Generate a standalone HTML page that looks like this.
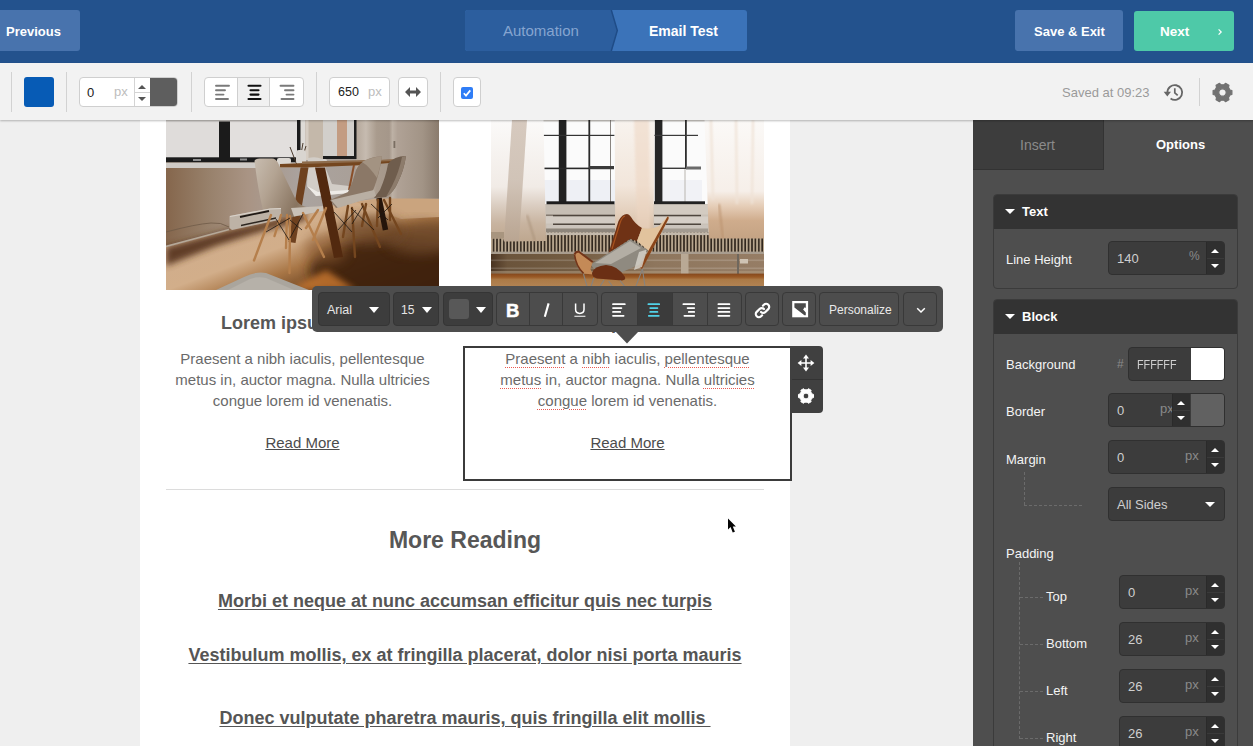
<!DOCTYPE html>
<html>
<head>
<meta charset="utf-8">
<title>Email Designer</title>
<style>
*{box-sizing:border-box;margin:0;padding:0}
html,body{width:1253px;height:746px;overflow:hidden}
body{position:relative;background:#efefef;font-family:"Liberation Sans",sans-serif;font-size:13px;color:#333}
.abs{position:absolute}
.t{position:absolute;white-space:nowrap;line-height:1}
/* top bar */
#topbar{position:absolute;left:0;top:0;width:1253px;height:63px;background:#23528d}
.tbtn{position:absolute;top:10px;height:41px;border-radius:3px;background:#4873ad;color:#fff;font-weight:700;font-size:13px}
/* toolbar */
#toolbar{position:absolute;left:0;top:63px;width:1253px;height:57px;background:#f2f2f2;box-shadow:0 1px 2px rgba(0,0,0,.26);z-index:5}
.sep{position:absolute;top:9px;width:1px;height:40px;background:#d2d2d2}
.wbox{position:absolute;top:14px;height:30px;background:#fff;border:1px solid #cfcfcf;border-radius:4px}
/* sidebar */
#side{position:absolute;left:973px;top:120px;width:280px;height:626px;background:#4e4e4e;color:#f2f2f2;z-index:4}
.panel{position:absolute;left:20px;width:245px;border:1px solid #3b3b3b;border-radius:4px;background:#4e4e4e;overflow:hidden}
.phead{position:absolute;left:0;top:0;width:100%;height:34px;background:#333}
.din{position:absolute;height:34px;background:#3c3c3c;border:1px solid #303030;border-radius:4px;overflow:hidden}
.spin{position:absolute;top:0;bottom:0;width:18px;background:#2f2f2f;border-left:1px solid #2a2a2a}
.spin:before{content:"";position:absolute;left:0;right:0;top:16px;height:1px;background:#3a3a3a}
.up{position:absolute;left:4px;top:7px;width:0;height:0;border-left:4.5px solid transparent;border-right:4.5px solid transparent;border-bottom:4px solid #fff}
.dn{position:absolute;left:4px;top:22px;width:0;height:0;border-left:4.5px solid transparent;border-right:4.5px solid transparent;border-top:4px solid #fff}
.val{position:absolute;left:8px;top:10px;font-size:13px;line-height:13px;color:#cfcfcf}
.unit{position:absolute;top:8px;font-size:13px;line-height:13px;color:#8a8a8a}
.lbl{margin-top:-1px;position:absolute;font-size:13px;line-height:13px;color:#f4f4f4;white-space:nowrap}
.dash-v{position:absolute;width:0;border-left:1px dashed #6b6b6b}
.dash-h{position:absolute;height:0;border-top:1px dashed #6b6b6b}
/* canvas */
#page{position:absolute;left:140px;top:120px;width:650px;height:626px;background:#fff}
.em{position:absolute;white-space:nowrap;font-family:"Liberation Sans",sans-serif}
/* float toolbar */
#ftb{position:absolute;left:312px;top:286px;width:631px;height:46px;background:#4d4d4d;border-radius:5px;z-index:8}
.fb{position:absolute;top:6px;height:34px;border:1px solid #393939;border-radius:4px;background:#4d4d4d;overflow:hidden}
.fb.dark{background:#3d3d3d;border-color:#353535}
.tri{position:absolute;width:0;height:0;border-left:5.5px solid transparent;border-right:5.5px solid transparent;border-top:6px solid #fff}
.vd{position:absolute;top:0;bottom:0;width:1px;background:#393939}
.sp u{text-decoration:underline dotted #ea5a52;text-decoration-thickness:1.3px;text-underline-offset:2.5px}
.lk{text-decoration-thickness:1.4px;text-underline-offset:2px}
</style>
</head>
<body>

<!-- ============ TOP BAR ============ -->
<div id="topbar">
  <div class="tbtn" style="left:-4px;width:84px"><span class="t" style="left:10px;top:15px">Previous</span></div>
  <!-- steps -->
  <svg class="abs" style="left:465px;top:10px" width="282" height="41" viewBox="0 0 282 41">
    <path d="M3 0H279Q282 0 282 3V38Q282 41 279 41H3Q0 41 0 38V3Q0 0 3 0Z" fill="#3b73b9"/>
    <path d="M3 0H146.3L152.3 20.5L146.3 41H3Q0 41 0 38V3Q0 0 3 0Z" fill="#2c5e9e"/>
    <path d="M146.3 0L152.3 20.5L146.3 41" fill="none" stroke="#1f4c87" stroke-width="1.5"/>
  </svg>
  <span class="t" style="left:503px;top:23px;font-size:15px;color:#86a5d0">Automation</span>
  <span class="t" style="left:649px;top:24px;font-size:14px;font-weight:700;color:#fff">Email Test</span>
  <div class="tbtn" style="left:1015px;width:108px"><span class="t" style="left:19px;top:15px">Save &amp; Exit</span></div>
  <div class="tbtn" style="left:1134px;top:11px;height:40px;width:100px;background:#4ec9a8"><span class="t" style="left:26px;top:14px;font-size:13.5px">Next</span>
    <svg class="abs" style="left:83px;top:17px" width="6" height="8" viewBox="0 0 6 8"><path d="M1.6 1.4L4.2 4L1.6 6.6" fill="none" stroke="#fff" stroke-width="1.2"/></svg>
  </div>
</div>

<!-- ============ TOOLBAR ============ -->
<div id="toolbar">
  <div class="sep" style="left:11px"></div>
  <div class="abs" style="left:24px;top:14px;width:30px;height:30px;border-radius:3px;background:#075bb5"></div>
  <div class="sep" style="left:66px"></div>
  <!-- border input -->
  <div class="wbox" style="left:79px;width:99px;overflow:hidden">
    <span class="t" style="left:7px;top:8px;font-size:13px;color:#222">0</span>
    <span class="t" style="left:34px;top:7px;font-size:13px;color:#bdbdbd">px</span>
    <div class="abs" style="left:54px;top:0;width:1px;height:28px;background:#d4d4d4"></div>
    <div class="abs" style="left:55px;top:14px;width:15px;height:1px;background:#d4d4d4"></div>
    <div class="abs" style="left:58px;top:7px;width:0;height:0;border-left:4px solid transparent;border-right:4px solid transparent;border-bottom:4px solid #555"></div>
    <div class="abs" style="left:58px;top:19px;width:0;height:0;border-left:4px solid transparent;border-right:4px solid transparent;border-top:4px solid #555"></div>
    <div class="abs" style="left:70px;top:-1px;width:29px;height:30px;background:#5e5e5e"></div>
  </div>
  <div class="sep" style="left:191px"></div>
  <!-- align group -->
  <div class="wbox" style="left:204px;width:100px;overflow:hidden">
    <div class="abs" style="left:32px;top:0;width:33px;height:28px;background:#f1f1f1;border-left:1px solid #cfcfcf;border-right:1px solid #cfcfcf"></div>
    <svg class="abs" style="left:0;top:-1px" width="98" height="28" viewBox="0 0 98 28" fill="none" stroke-linecap="round" stroke-width="1.9">
      <g stroke="#7a7a7a"><path d="M11 8.8H24M11 13.2H20M11 17.6H18.5M11 22H23"/></g>
      <g stroke="#111" stroke-width="2.1"><path d="M43.5 8.8H55.5M45.5 13.2H53.5M45.5 17.6H53.5M43.5 22H55.5"/></g>
      <g stroke="#7a7a7a"><path d="M75.5 8.8H88.5M80 13.2H88.5M81.5 17.6H88.5M76.5 22H88.5"/></g>
    </svg>
  </div>
  <div class="sep" style="left:316px"></div>
  <div class="wbox" style="left:329px;width:61px">
    <span class="t" style="left:8px;top:8px;font-size:12.5px;color:#222">650</span>
    <span class="t" style="left:38px;top:7px;font-size:13px;color:#bdbdbd">px</span>
  </div>
  <div class="wbox" style="left:398px;width:30px">
    <svg class="abs" style="left:6px;top:8px" width="16" height="12" viewBox="0 0 16 12"><path d="M0 6L5 1V4.6H11V1L16 6L11 11V7.4H5V11Z" fill="#555"/></svg>
  </div>
  <div class="sep" style="left:440px"></div>
  <div class="wbox" style="left:453px;width:28px">
    <div class="abs" style="left:7px;top:9px;width:12px;height:12px;border-radius:2px;background:#2f7df6"></div>
    <svg class="abs" style="left:7px;top:9px" width="12" height="12" viewBox="0 0 12 12"><path d="M2.8 6.2L5 8.6L9.3 3.4" fill="none" stroke="#fff" stroke-width="1.7"/></svg>
  </div>
  <span class="t" style="left:1062px;top:23px;font-size:13px;color:#9a9a9a">Saved at 09:23</span>
  <!-- history icon -->
  <svg class="abs" style="left:1163px;top:20px" width="22" height="19" viewBox="0 0 22 19" fill="none">
    <path d="M4.4 9.5A7.4 7.4 0 1 1 7.56 15.56" stroke="#666" stroke-width="1.8"/>
    <path d="M0.7 8.7H8L4.3 13.5Z" fill="#666"/>
    <path d="M11.8 5.2V9.8L14.7 12.4" stroke="#666" stroke-width="1.7"/>
  </svg>
  <div class="abs" style="left:1199px;top:15px;width:1px;height:28px;background:#d2d2d2"></div>
  <svg class="abs" style="left:1212px;top:19px" width="21" height="21" viewBox="-10.5 -10.5 21 21"><path fill-rule="evenodd" fill="#727272" stroke="#727272" stroke-width="1.2" stroke-linejoin="round" d="M7.49 -2.52L9.39 -2.00L9.39 2.00L7.49 2.52L5.93 5.22L6.42 7.13L2.97 9.13L1.56 7.74L-1.56 7.74L-2.97 9.13L-6.42 7.13L-5.93 5.22L-7.49 2.52L-9.39 2.00L-9.39 -2.00L-7.49 -2.52L-5.93 -5.22L-6.42 -7.13L-2.97 -9.13L-1.56 -7.74L1.56 -7.74L2.97 -9.13L6.42 -7.13L5.93 -5.22ZM3.7 0A3.7 3.7 0 1 0 -3.7 0A3.7 3.7 0 1 0 3.7 0Z"/></svg>
</div>

<!-- ============ CANVAS PAGE ============ -->
<div id="page"></div>

<svg class="abs" style="left:166px;top:120px;z-index:1" width="273" height="170" viewBox="0 0 273 170">
  <defs>
    <linearGradient id="lwall" x1="0" x2="1" y1="0" y2="0">
      <stop offset="0" stop-color="#85664c"/><stop offset="0.15" stop-color="#97806a"/><stop offset="0.3" stop-color="#a99484"/><stop offset="0.5" stop-color="#aaa39f"/><stop offset="1" stop-color="#a89a8c"/>
    </linearGradient>
    <linearGradient id="lfloor" x1="0" x2="1" y1="0" y2="0.9">
      <stop offset="0" stop-color="#cdac8e"/><stop offset="0.5" stop-color="#d2ae8a"/><stop offset="0.64" stop-color="#a87646"/><stop offset="0.82" stop-color="#5e391c"/><stop offset="1" stop-color="#3a1e0e"/>
    </linearGradient>
    <linearGradient id="lrwall" x1="0" x2="1" y1="0" y2="0">
      <stop offset="0" stop-color="#b5a89b"/><stop offset="0.12" stop-color="#c6bbb0"/><stop offset="0.25" stop-color="#a99b8d"/><stop offset="0.4" stop-color="#a5978a"/><stop offset="0.44" stop-color="#bdb1a5"/><stop offset="0.5" stop-color="#b0a296"/><stop offset="0.8" stop-color="#a29486"/><stop offset="1" stop-color="#8a7b6d"/>
    </linearGradient>
    <linearGradient id="lchair1" x1="0" x2="1" y1="0" y2="0.4">
      <stop offset="0" stop-color="#c8bdb0"/><stop offset="0.35" stop-color="#b3a392"/><stop offset="0.8" stop-color="#887460"/><stop offset="1" stop-color="#a39380"/>
    </linearGradient>
    <filter id="b3" x="-20%" y="-20%" width="140%" height="140%"><feGaussianBlur stdDeviation="3"/></filter>
    <filter id="b6" x="-30%" y="-30%" width="160%" height="160%"><feGaussianBlur stdDeviation="6"/></filter>
    <filter id="b1" x="-10%" y="-10%" width="120%" height="120%"><feGaussianBlur stdDeviation="0.7"/></filter>
    <clipPath id="lclip"><rect width="273" height="170"/></clipPath>
  </defs>
  <g clip-path="url(#lclip)">
  <!-- wall -->
  <rect width="273" height="170" fill="url(#lwall)"/>
  <!-- floor -->
  <path d="M0 127L63 110L115 98L150 88L200 80L227 77L273 79V170H0Z" fill="url(#lfloor)"/>
  <!-- lighter strip top right of floor -->
  <path d="M190 82L227 77L273 79V97L235 99Z" fill="#caa47e" filter="url(#b1)"/>
  <!-- floor shadow band along wall -->
  <path d="M0 127L63 110L115 98L140 92L140 100L100 110L50 126L0 146Z" fill="#54331a" opacity=".9" filter="url(#b3)"/>
  <!-- big dark shadow under table -->
  <ellipse cx="222" cy="150" rx="78" ry="34" fill="#41220f" opacity=".92" filter="url(#b6)"/>
  <ellipse cx="255" cy="118" rx="36" ry="16" fill="#6e4a2c" opacity=".8" filter="url(#b6)"/>
  <path d="M130 166L160 150L190 170H130Z" fill="#c4752f" opacity=".85" filter="url(#b3)"/>
  <ellipse cx="160" cy="128" rx="22" ry="16" fill="#8a5a30" opacity=".55" filter="url(#b6)"/>
  <ellipse cx="203" cy="110" rx="34" ry="15" fill="#6a4426" opacity=".7" filter="url(#b6)"/>
  <!-- right wall + door -->
  <rect x="190" y="0" width="83" height="78.5" fill="url(#lrwall)"/>
  <rect x="227.5" y="21" width="1.8" height="7" fill="#7a6e62"/>
  <!-- window 1 panes -->
  <rect x="0" y="0" width="135" height="42.5" fill="#1b1b1b"/>
  <rect x="0" y="0" width="53" height="37.3" fill="#dfdcda"/>
  <rect x="64" y="0" width="67" height="37.3" fill="#e2dfdd"/>
  <rect x="0" y="0" width="131" height="1.5" fill="#c9c5c1"/>
  <rect x="27" y="39" width="8" height="2" fill="#8d8d8d"/><rect x="74" y="38.5" width="7" height="2" fill="#8d8d8d"/>
  <rect x="0" y="42.5" width="135" height="5.5" fill="#cfcbc6"/>
  <!-- pillar + window 2 -->
  <rect x="134.5" y="0" width="5" height="37" fill="#dedbd7"/>
  <rect x="139.5" y="0" width="18" height="40" fill="#c4b8aa"/>
  <rect x="139.5" y="0" width="3" height="40" fill="#d6cdc3"/>
  <rect x="157" y="0" width="33.5" height="39" fill="#1d1d1d"/>
  <rect x="157" y="0" width="31" height="36" fill="#d2cfcb"/>
  <rect x="171" y="0" width="10" height="36" fill="#c39c82"/>
  <!-- table items -->
  <path d="M131 45L124 27M134 45L140 26M133 45L137 23" stroke="#4a3a2c" stroke-width="1" fill="none"/>
  <rect x="130" y="30" width="10" height="14" rx="3" fill="#d9d5d0"/>
  <rect x="111" y="38" width="14" height="6" rx="2" fill="#dcd8d3"/>
  <rect x="147" y="39" width="14" height="5" rx="2" fill="#d5d0ca"/>
  <!-- back chair -->
  <path d="M142 38Q150 36 156 39L166 64L183 66V73L150 76L141 66Z" fill="#d2cdc7"/>
  <path d="M141 66L150 76L183 73V70L152 72Z" fill="#eeebe7"/>
  <!-- table top -->
  <path d="M114 44L229 39.5V42.5L200 45L140 47.5H114Z" fill="#74461f"/>
  <path d="M136 41.5L229 39.5V41L136 44Z" fill="#8d6b4b"/>
  <!-- table legs -->
  <path d="M134.5 47.5H142.5L129.5 123L122.5 122Z" fill="#6e411f"/>
  <path d="M149 47.5H159L177 137L168 138Z" fill="#52290f"/>
  <path d="M188 45L183 70" stroke="#8a4e28" stroke-width="2"/>
  <path d="M213 78L219.5 110" stroke="#24140a" stroke-width="5.5"/>
  <!-- chair 3 (far right) -->
  <path d="M222 44Q228 36 240 36Q238 50 232 62Q228 72 220 77L208 78L214 70Q220 56 222 44Z" fill="#6f5d4d"/>
  <path d="M236 37Q239 36 240 36Q238 50 232 62Q228 72 220 77L226 66Q233 52 236 37Z" fill="#8d7c6c"/>
  <!-- chair 2 -->
  <path d="M190 50Q196 37 216 36.5Q213 55 208 68Q205 76 196 80L170 88L164 80L182 72Q187 62 190 50Z" fill="#8b7867"/>
  <path d="M196 42Q204 37 216 36.5Q214 48 211 58Q203 46 196 42Z" fill="#a39382"/>
  <path d="M165 80L208 70L210 76L172 88Z" fill="#b9afa3"/>
  <!-- chair 1 (front-left) -->
  <path d="M88.5 41Q89 38.5 94 38.5H106Q110 38.5 112 43L129 78Q133 86 142 87.5L157 86V91L126 97Q104 98 97 90Q92 70 88.5 41Z" fill="url(#lchair1)"/>
  <path d="M125 88L157 86V91L128 96.5Z" fill="#c9c1b7"/>
  <!-- heater -->
  <path d="M63.5 96L104 88.5L115 88V99.5L66 110L63.5 108Z" fill="#bdb2a6"/>
  <path d="M64 96.5L104 89L115 88.5" stroke="#d9d2ca" stroke-width="1.2" fill="none"/>
  <path d="M74 97L103 91" stroke="#1f1915" stroke-width="1.8"/>
  <path d="M75 105.5L110 98" stroke="#2d2620" stroke-width="1.3"/>
  <path d="M0 112Q30 104 45 103Q55 102 63 107" stroke="#6f5a48" stroke-width="0.8" fill="none"/>
  <path d="M0 126.5L63 109.5" stroke="#b5a898" stroke-width="1.8"/>
  <!-- chair legs -->
  <g stroke="#b57f4c" stroke-width="2.4" stroke-linecap="round" fill="none">
    <path d="M105 95L88 140.5"/><path d="M124 96L123.5 153"/><path d="M115 95L108.5 116"/><path d="M121 95L120 128"/>
    <path d="M137 93L158 137"/><path d="M160 88L147 120"/><path d="M152 90L140 108"/>
  </g>
  <g stroke="#74461f" stroke-width="2.4" stroke-linecap="round" fill="none">
    <path d="M186 88L189 137"/><path d="M182 86L177 117"/><path d="M196 84L214 127"/><path d="M200 84L196 106"/>
    <path d="M218 80L235 114"/><path d="M212 80L211 106"/><path d="M224 78L224 100"/>
  </g>
  <g stroke="#1d1611" stroke-width="0.8" fill="none">
    <path d="M100 112L124 98M110 99L123 120M124 100L136 110M137 94L124 118"/>
    <path d="M168 92L186 112M190 90L172 110M197 86L186 104M185 88L208 110M205 84L222 100M226 84L212 98"/>
  </g>
  <!-- rug -->
  <path d="M50 170L78 157Q90 151 100 153L143 170Z" fill="#aaa59d"/>
  <path d="M62 170L84 159Q92 156 100 158L128 170Z" fill="#b6b1a9" filter="url(#b1)"/>
  </g>
</svg>


<svg class="abs" style="left:491px;top:120px;z-index:1" width="273" height="170" viewBox="0 0 273 170">
  <defs>
    <linearGradient id="rcurt1" x1="0" x2="0" y1="0" y2="1">
      <stop offset="0" stop-color="#fbfaf9"/><stop offset="0.55" stop-color="#f1ebe6"/><stop offset="0.7" stop-color="#dbcec2"/><stop offset="0.85" stop-color="#c8b4a0"/><stop offset="1" stop-color="#bea78f"/>
    </linearGradient>
    <linearGradient id="rcurt2" x1="0" x2="0" y1="0" y2="1">
      <stop offset="0" stop-color="#f8f3ee"/><stop offset="0.6" stop-color="#f2e6db"/><stop offset="0.85" stop-color="#e3cfbc"/><stop offset="1" stop-color="#d8bfa7"/>
    </linearGradient>
    <linearGradient id="rcurt3" x1="0" x2="0" y1="0" y2="1">
      <stop offset="0" stop-color="#fbf9f7"/><stop offset="0.6" stop-color="#f6efe9"/><stop offset="0.72" stop-color="#e6cfba"/><stop offset="0.85" stop-color="#cfac8c"/><stop offset="1" stop-color="#c4a384"/>
    </linearGradient>
    <linearGradient id="rfold" x1="0" x2="0" y1="0" y2="1">
      <stop offset="0" stop-color="#d2c4b8"/><stop offset="0.5" stop-color="#cdbfb2"/><stop offset="1" stop-color="#b9a592"/>
    </linearGradient>
    <linearGradient id="rfloor" x1="0" x2="0" y1="0" y2="1">
      <stop offset="0" stop-color="#85481c"/><stop offset="0.2" stop-color="#9a5a26"/><stop offset="0.35" stop-color="#ab7a47"/><stop offset="1" stop-color="#b5885a"/>
    </linearGradient>
    <linearGradient id="rlow" x1="0" x2="1" y1="0" y2="0"><stop offset="0" stop-color="#4a3422"/><stop offset="0.06" stop-color="#6b543b"/><stop offset="0.3" stop-color="#735c42"/><stop offset="0.6" stop-color="#8e765d"/><stop offset="1" stop-color="#967d65"/></linearGradient>
    <pattern id="rad" x="0" y="0" width="3.4" height="20" patternUnits="userSpaceOnUse">
      <rect width="3.4" height="20" fill="#b9a78f"/><rect x="1.8" width="1.6" height="20" fill="#30261d"/>
    </pattern>
    <filter id="rb1" x="-10%" y="-10%" width="120%" height="120%"><feGaussianBlur stdDeviation="0.8"/></filter>
    <filter id="rb2" x="-10%" y="-10%" width="120%" height="120%"><feGaussianBlur stdDeviation="2"/></filter>
    <clipPath id="rclip"><rect width="273" height="170"/></clipPath>
  </defs>
  <g clip-path="url(#rclip)">
  <rect width="273" height="170" fill="#fbfbfb"/>
  <rect width="273" height="1.5" fill="#d6d2ce"/>
  <!-- lower wall behind -->
  <rect x="0" y="84" width="273" height="70" fill="#c9c1b7"/>
  <!-- window 1 -->
  <rect x="52" y="60" width="72" height="22" fill="#eef0f5"/>
  <rect x="67.8" y="0" width="7.6" height="84" fill="#222"/>
  <rect x="97.4" y="0" width="1.8" height="82" fill="#2a2a2a"/>
  <rect x="119" y="0" width="1" height="82" fill="#8a8580"/>
  <rect x="52.5" y="14.8" width="71" height="1.2" fill="#333"/>
  <rect x="53" y="47.6" width="70" height="1.6" fill="#2a2a2a"/>
  <rect x="98" y="46" width="25" height="3" fill="#3a3a3a"/>
  <rect x="55.5" y="81.3" width="68" height="3.2" fill="#1d1d1d"/>
  <!-- window 2 -->
  <rect x="171" y="60" width="40" height="22" fill="#f1f2f6"/>
  <rect x="163.8" y="0" width="7.6" height="84" fill="#262626"/>
  <rect x="194" y="0" width="1.8" height="48" fill="#2e2e2e"/>
  <rect x="193.5" y="48" width="1" height="34" fill="#b9b5b0"/>
  <rect x="162" y="14.8" width="45" height="1.2" fill="#3a3a3a"/>
  <rect x="171" y="47.6" width="24" height="1.4" fill="#3a3a3a"/>
  <rect x="195" y="46.5" width="15" height="3" fill="#6a6a6a"/>
  <rect x="163" y="81.3" width="51" height="3" fill="#222"/>
  <!-- far right window bits -->
  <rect x="269" y="14.5" width="4" height="1.2" fill="#777"/><rect x="269" y="48" width="4" height="1.2" fill="#777"/>
  <rect x="268.5" y="64" width="4.5" height="12" fill="#7a6a55"/><rect x="269" y="80.5" width="4" height="3" fill="#222"/>
  <!-- sill panels under window 1 -->
  <rect x="55" y="84.5" width="69" height="10" fill="#c6beb4"/>
  <rect x="55" y="94.5" width="69" height="1.4" fill="#7e746a"/>
  <rect x="62" y="95" width="62" height="1.6" fill="#4f463e"/>
  <rect x="55" y="96.5" width="69" height="7" fill="#d2cbc3"/>
  <rect x="62" y="103.5" width="62" height="1.6" fill="#4f463e"/>
  <rect x="56" y="105" width="68" height="3.5" fill="#cbc4bc"/>
  <rect x="55" y="108.5" width="69" height="4" fill="#8d857b"/>
  <!-- sill panels under window 2 -->
  <rect x="163" y="84.5" width="54" height="10" fill="#d3cbc1"/>
  <rect x="163" y="94.8" width="47" height="1.8" fill="#4f463e"/>
  <rect x="163" y="96.5" width="54" height="7" fill="#d6cfc7"/>
  <rect x="163" y="103.5" width="47" height="1.6" fill="#4f463e"/>
  <rect x="163" y="105" width="54" height="3.5" fill="#cbc4bc"/>
  <rect x="163" y="108.5" width="54" height="4" fill="#a39b91"/>
  <!-- radiator -->
  <rect x="0" y="112.5" width="273" height="21.5" fill="url(#rad)"/>
  <rect x="0" y="112.5" width="273" height="2.6" fill="#c3b9ac"/>
  <rect x="0" y="131.6" width="273" height="2.6" fill="#a99d8f"/>
  <!-- below radiator: pipes -->
  <rect x="0" y="134" width="273" height="20" fill="url(#rlow)"/>
  <rect x="0" y="139.5" width="273" height="1.6" fill="#fff" opacity=".16"/>
  <rect x="0" y="147.5" width="273" height="1.6" fill="#fff" opacity=".16"/>
  
  
  <rect x="0" y="151" width="273" height="3" fill="#b09a80" opacity=".55"/>
  <rect x="190" y="134" width="7.5" height="20" fill="#b9a995"/>
  <rect x="246" y="134" width="2" height="20" fill="#6f675d"/>
  <rect x="249" y="139" width="8" height="4.5" fill="#cfc3b3"/>
  <!-- floor -->
  <rect x="0" y="153.6" width="273" height="17" fill="url(#rfloor)"/>
  
  <!-- curtains -->
  <path d="M0 0H52.5L55 121L13 121.5L12 118.5L0 118.5Z" fill="url(#rcurt1)"/>
  <path d="M21 0H36L28 121H13Z" fill="url(#rfold)" opacity=".9"/>
  <path d="M0 112H13V118.5H0Z" fill="#a8957f"/>
  <path d="M36 95L44 121" stroke="#a58d74" stroke-width="1.2" filter="url(#rb1)"/>
  <path d="M123.7 0H163.5L162.5 109H124.2Z" fill="url(#rcurt2)"/>
  <path d="M143 0H158L159 109H146Z" fill="#eed6c2" opacity=".55" filter="url(#rb1)"/>
  <path d="M213.5 0H273V118.5H218Z" fill="url(#rcurt3)"/>
  <path d="M228 84L232 118.5" stroke="#b98f6a" stroke-width="1.4" filter="url(#rb1)"/>
  <path d="M220 0L222 80M245 0L246 84M262 0L261 84" stroke="#efe2d6" stroke-width="2" filter="url(#rb1)"/>
  <!-- chair: back dark leather -->
  <path d="M136 94Q131 94 127.5 101L117.5 133L126 128L139 119L146 121L151 108Q144 104 140 97Q138 94 136 94Z" fill="#6f3215"/>
  <path d="M134 96Q131 97 129 103L121 129" stroke="#a9531f" stroke-width="1.2" fill="none"/>
  <!-- chair inside lit leather -->
  <path d="M151 108Q160 110 168 106L176.5 96.5Q178 96 177.5 99L160 132L156 129.5L146 121Z" fill="#e2c39d"/>
  <path d="M176.5 96.5Q178 96 177.5 99L158 136L151 149L148.5 147.5L160 126Z" fill="#8a4519"/>
  <!-- pillow -->
  <path d="M99.5 144.5L139.3 119.2L155.8 129.5L148.5 144.5L130 152.5L103 149Z" fill="#8f8a80"/>
  <path d="M104 143L139 121L150 128L120 144Z" fill="#b3aea4"/>
  <path d="M148 132L156 129.5L151 147L143 150Z" fill="#d8d4cc" opacity=".8"/>
  <!-- left wing -->
  <path d="M83.4 134.5Q85 131 88 131.8L101.7 142L99.4 149L101.7 154.6L92.5 153.4Q87 148 85 142Z" fill="#c48a57"/>
  <path d="M83.4 134.5Q85 131 88 131.8L101.7 142" stroke="#73351a" stroke-width="2" fill="none"/>
  <path d="M83.6 135Q85 146 92.5 153.4" stroke="#73351a" stroke-width="1.6" fill="none"/>
  <!-- front lip -->
  <path d="M101 153Q103 146 115 145Q127 145.5 134 157Q135 160 131 160.5L106 158.5Q101 157 101 153Z" fill="#6b2f14"/>
  <!-- legs -->
  <g stroke="#86837f" stroke-width="1.1" fill="none">
    <path d="M92.5 154L97 170M102.8 158L99 170M113 160L107 170M117.6 161L124 170M129 160.5L136.5 170M151.5 149L143.5 170M151.5 149L154.5 170"/>
  </g>
  </g>
</svg>

<!-- ============ EMAIL CONTENT ============ -->
<div class="em" style="left:166px;top:310.5px;width:273px;text-align:center;font-size:18px;line-height:24px;font-weight:700;color:#575757">Lorem ipsum dolor</div>
<div class="em" style="left:491px;top:310.5px;width:273px;text-align:center;font-size:18px;line-height:24px;font-weight:700;color:#575757">Lorem ipsum dolor</div>
<div class="em" style="left:166px;top:348px;width:273px;text-align:center;font-size:15px;line-height:21px;color:#6a6a6a;white-space:normal">Praesent a nibh iaculis, pellentesque<br>metus in, auctor magna. Nulla ultricies<br>congue lorem id venenatis.<br><br><span style="color:#4c4c4c;text-decoration:underline">Read More</span></div>
<!-- selected block -->
<div class="abs" style="left:463px;top:346px;width:329px;height:135px;border:2px solid #3b3b3b;background:#fff;z-index:3"></div>
<div class="em sp" style="left:491px;top:348px;width:273px;text-align:center;font-size:15px;line-height:21px;color:#6a6a6a;white-space:normal;z-index:4"><u>Praesent</u> a <u>nibh</u> iaculis, <u>pellentesque</u><br><u>metus</u> in, auctor magna. Nulla <u>ultricies</u><br><u>congue</u> lorem id venenatis.<br><br><span style="color:#4c4c4c;text-decoration:underline">Read More</span></div>
<!-- handles -->
<div class="abs" style="left:790px;top:346px;width:33px;height:67px;background:#404040;border-radius:0 4px 4px 0;z-index:3">
  <div class="abs" style="left:2px;top:33px;width:31px;height:1px;background:#333"></div>
  <svg class="abs" style="left:7px;top:8px" width="18" height="18" viewBox="0 0 18 18"><path d="M9 0.6L12 4.4H9.8V8.2H13.6V6L17.4 9L13.6 12V9.8H9.8V13.6H12L9 17.4L6 13.6H8.2V9.8H4.4V12L0.6 9L4.4 6V8.2H8.2V4.4H6Z" fill="#fff"/></svg>
  <svg class="abs" style="left:7px;top:41px" width="18" height="18" viewBox="-9 -9 18 18"><path fill-rule="evenodd" fill="#fff" stroke="#fff" stroke-width="1.0" stroke-linejoin="round" d="M5.97 -2.01L7.53 -1.60L7.53 1.60L5.97 2.01L4.73 4.17L5.15 5.72L2.38 7.32L1.25 6.18L-1.25 6.18L-2.38 7.32L-5.15 5.72L-4.73 4.17L-5.97 2.01L-7.53 1.60L-7.53 -1.60L-5.97 -2.01L-4.73 -4.17L-5.15 -5.72L-2.38 -7.32L-1.25 -6.18L1.25 -6.18L2.38 -7.32L5.15 -5.72L4.73 -4.17ZM2.9 0A2.9 2.9 0 1 0 -2.9 0A2.9 2.9 0 1 0 2.9 0Z"/></svg>
</div>
<!-- hr -->
<div class="abs" style="left:166px;top:489px;width:598px;height:1px;background:#dcdcdc"></div>
<div class="em" style="left:140px;top:525px;width:650px;text-align:center;font-size:23px;line-height:30px;font-weight:700;color:#575757">More Reading</div>
<div class="em lk" style="left:140px;top:589px;width:650px;text-align:center;font-size:18px;line-height:24px;font-weight:700;color:#555;text-decoration:underline">Morbi et neque at nunc accumsan efficitur quis nec turpis</div>
<div class="em lk" style="left:140px;top:643px;width:650px;text-align:center;font-size:18px;line-height:24px;font-weight:700;color:#555;text-decoration:underline">Vestibulum mollis, ex at fringilla placerat, dolor nisi porta mauris</div>
<div class="em lk" style="left:140px;top:706px;width:650px;text-align:center;font-size:18px;line-height:24px;font-weight:700;color:#555;text-decoration:underline;white-space:pre">Donec vulputate pharetra mauris, quis fringilla elit mollis&nbsp;</div>
<!-- mouse cursor -->
<svg class="abs" style="left:726px;top:517px;z-index:20" width="13" height="19" viewBox="0 0 13 19"><path d="M2 1.6V12.4L4.6 10.1L6.7 15.6L8.9 14.7L6.8 9.5H9.9Z" fill="#050505" stroke="#fff" stroke-width="1.2" paint-order="stroke"/></svg>

<!-- ============ FLOATING TEXT TOOLBAR ============ -->
<div id="ftb">
  <svg class="abs" style="left:303px;top:45px" width="24" height="13" viewBox="0 0 24 13"><path d="M0 0H24L12 12.5Z" fill="#4d4d4d"/></svg>
  <div class="fb dark" style="left:6px;width:72px"><span class="t" style="left:8px;top:11px;font-size:12.5px;color:#e6e6e6">Arial</span><div class="tri" style="left:50px;top:14px"></div></div>
  <div class="fb dark" style="left:81px;width:46px"><span class="t" style="left:7px;top:11px;font-size:12px;color:#e6e6e6">15</span><div class="tri" style="left:28px;top:14px"></div></div>
  <div class="fb dark" style="left:131px;width:50px"><div class="abs" style="left:5px;top:6px;width:20px;height:20px;border-radius:3px;background:#585858"></div><div class="tri" style="left:32px;top:14px"></div></div>
  <!-- B I U -->
  <div class="fb" style="left:184px;width:102px">
    <div class="vd" style="left:32px"></div><div class="vd" style="left:65px"></div>
    <span class="t" style="left:9px;top:8.5px;font-size:18.5px;font-weight:700;color:#fff;-webkit-text-stroke:0.5px #fff">B</span>
    <svg class="abs" style="left:43.5px;top:9px" width="12" height="16" viewBox="0 0 12 16"><path d="M7.6 1.4L3.8 14.8" stroke="#fff" stroke-width="2.1"/></svg>
    <svg class="abs" style="left:75px;top:9px" width="16" height="16" viewBox="0 0 16 16"><path d="M3.6 1.6V7.6Q3.6 11.4 7.8 11.4Q12 11.4 12 7.6V1.6" fill="none" stroke="#fff" stroke-width="1.5"/><path d="M2.4 14.2H13.4" stroke="#fff" stroke-width="1.1"/></svg>
  </div>
  <!-- align group -->
  <div class="fb" style="left:289px;width:141px">
    <div class="abs" style="left:35px;top:0;width:35px;height:32px;background:#3b3b3b"></div>
    <div class="vd" style="left:34.5px"></div><div class="vd" style="left:69.5px"></div><div class="vd" style="left:104.5px"></div>
    <svg class="abs" style="left:0;top:0" width="139" height="32" viewBox="0 0 139 32" fill="none" stroke-width="1.8" stroke-linecap="round">
      <path d="M11 11.2H22.8M11 15.1H19.4M11 18.9H18.2M11 22.8H21.6" stroke="#fff"/>
      <path d="M46.4 11.2H57.2M48.2 15.1H55.4M48.2 18.9H55.4M46.8 22.8H56.8" stroke="#52d2e8"/>
      <path d="M81.4 11.2H92.2M85.6 15.1H92.2M86.8 18.9H92.2M82.4 22.8H92.2" stroke="#fff"/>
      <path d="M116.4 11.2H127.4M116.4 15.1H127.4M116.4 18.9H127.4M116.4 22.8H127.4" stroke="#fff"/>
    </svg>
  </div>
  <!-- link -->
  <div class="fb" style="left:433px;width:34px">
    <svg class="abs" style="left:7.5px;top:9px" width="17" height="17" viewBox="0 0 17 17" fill="none" stroke="#fff" stroke-width="2.2" stroke-linecap="round"><path d="M7 10A3.1 3.1 0 0 0 11.4 10L14.3 7.1A3.1 3.1 0 0 0 9.9 2.7L8.9 3.7"/><path d="M10 7A3.1 3.1 0 0 0 5.6 7L2.7 9.9A3.1 3.1 0 0 0 7.1 14.3L8.1 13.3"/></svg>
  </div>
  <!-- image -->
  <div class="fb" style="left:470px;width:34px">
    <svg class="abs" style="left:8.5px;top:8px" width="17" height="17" viewBox="0 0 17 17"><rect x="0.2" y="0" width="15.9" height="16.3" fill="#fff"/><path d="M2.4 2.3H13.8V6.9L12.7 6.3L11.1 8.4L13.8 11.6V14.3H12.4L2.4 6.6Z" fill="#4a4a4a"/></svg>
  </div>
  <div class="fb" style="left:507px;width:80px"><span class="t" style="left:9px;top:11px;font-size:12px;color:#e9e9e9">Personalize</span></div>
  <div class="fb" style="left:591px;width:34px">
    <svg class="abs" style="left:12px;top:14px" width="10" height="7" viewBox="0 0 10 7"><path d="M1.2 1.2L5 5L8.8 1.2" fill="none" stroke="#fff" stroke-width="1.5"/></svg>
  </div>
</div>


<!-- ============ SIDEBAR ============ -->
<div id="side">
  <div class="abs" style="left:0;top:0;width:131px;height:50px;background:#3d3d3d;border-right:1px solid #333;border-bottom:1px solid #333"></div>
  <span class="t" style="left:47px;top:18px;font-size:14px;color:#8b8b8b">Insert</span>
  <span class="t" style="left:183px;top:18px;font-size:13px;font-weight:700;color:#fff">Options</span>

  <!-- Text panel -->
  <div class="panel" style="top:74px;height:95px">
    <div class="phead"></div>
    <div class="tri" style="left:11px;top:14px;border-left-width:5px;border-right-width:5px;border-top-width:5.5px"></div>
    <span class="t" style="left:28px;top:10px;font-size:13px;font-weight:700;color:#fff">Text</span>
    <span class="lbl" style="left:12px;top:59px">Line Height</span>
    <div class="din" style="left:114px;top:46px;width:117px">
      <span class="val">140</span><span class="unit" style="left:80px;font-size:12px">%</span>
      <div class="spin" style="right:0"><i class="up"></i><i class="dn"></i></div>
    </div>
  </div>

  <!-- Block panel -->
  <div class="panel" style="top:179px;height:460px">
    <div class="phead"></div>
    <div class="tri" style="left:11px;top:14px;border-left-width:5px;border-right-width:5px;border-top-width:5.5px"></div>
    <span class="t" style="left:28px;top:10px;font-size:13px;font-weight:700;color:#fff">Block</span>

    <span class="lbl" style="left:12px;top:59px">Background</span>
    <span class="t" style="left:123px;top:58px;font-size:12px;color:#8a8a8a">#</span>
    <div class="din" style="left:134px;top:47px;width:97px">
      <span class="val" style="display:inline-block;transform:scaleX(.83);transform-origin:0 0">FFFFFF</span>
      <div class="abs" style="left:62px;top:-1px;width:34px;height:34px;background:#fff"></div>
    </div>

    <span class="lbl" style="left:12px;top:106px">Border</span>
    <div class="din" style="left:114px;top:93px;width:117px">
      <span class="val">0</span><span class="unit" style="left:51px">px</span>
      <div class="spin" style="left:63px"><i class="up"></i><i class="dn"></i></div>
      <div class="abs" style="left:82px;top:-1px;width:34px;height:34px;background:#616161"></div>
    </div>

    <span class="lbl" style="left:12px;top:154px">Margin</span>
    <div class="din" style="left:114px;top:140px;width:117px">
      <span class="val">0</span><span class="unit" style="left:76px">px</span>
      <div class="spin" style="right:0"><i class="up"></i><i class="dn"></i></div>
    </div>
    <div class="dash-v" style="left:30px;top:172px;height:33px"></div>
    <div class="dash-h" style="left:30px;top:205px;width:58px"></div>
    <div class="din" style="left:114px;top:187px;width:117px">
      <span class="val" style="top:10px">All Sides</span>
      <div class="tri" style="left:96px;top:14px;border-top-width:5.5px"></div>
    </div>

    <span class="lbl" style="left:12px;top:248px">Padding</span>
    <div class="dash-v" style="left:25px;top:262px;height:177px"></div>

    <div class="dash-h" style="left:26px;top:297px;width:23px"></div>
    <span class="lbl" style="left:52px;top:291px">Top</span>
    <div class="din" style="left:125px;top:275px;width:106px">
      <span class="val">0</span><span class="unit" style="left:65px">px</span>
      <div class="spin" style="right:0"><i class="up"></i><i class="dn"></i></div>
    </div>
    <div class="dash-h" style="left:26px;top:344px;width:23px"></div>
    <span class="lbl" style="left:52px;top:338px">Bottom</span>
    <div class="din" style="left:125px;top:322px;width:106px">
      <span class="val">26</span><span class="unit" style="left:65px">px</span>
      <div class="spin" style="right:0"><i class="up"></i><i class="dn"></i></div>
    </div>
    <div class="dash-h" style="left:26px;top:391px;width:23px"></div>
    <span class="lbl" style="left:52px;top:385px">Left</span>
    <div class="din" style="left:125px;top:369px;width:106px">
      <span class="val">26</span><span class="unit" style="left:65px">px</span>
      <div class="spin" style="right:0"><i class="up"></i><i class="dn"></i></div>
    </div>
    <div class="dash-h" style="left:26px;top:438px;width:23px"></div>
    <span class="lbl" style="left:52px;top:432px">Right</span>
    <div class="din" style="left:125px;top:416px;width:106px">
      <span class="val">26</span><span class="unit" style="left:65px">px</span>
      <div class="spin" style="right:0"><i class="up"></i><i class="dn"></i></div>
    </div>
  </div>
</div>

</body>
</html>
